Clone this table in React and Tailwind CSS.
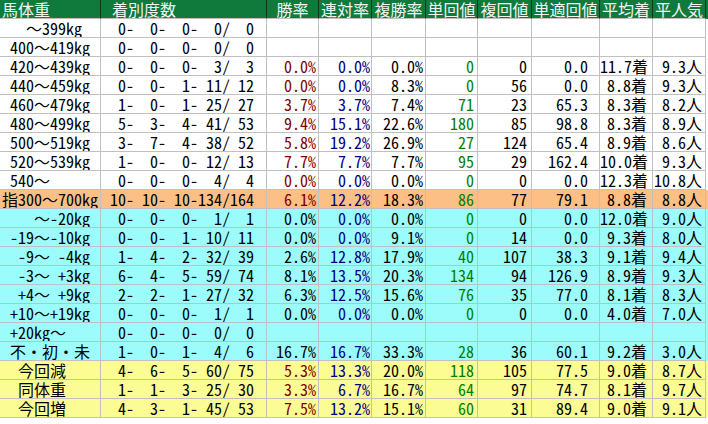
const cols = "grid grid-cols-[101px_166px_52px_53px_54px_52px_54px_68px_53px_53px]";

const headers = ["馬体重", "着別度数", "勝率", "連対率", "複勝率", "単回値", "複回値", "単適回値", "平均着", "平人気"];

// label, counts, win, rentai, fukusho, tan, fuku, tanteki, chaku, ninki
const rows = [
  ["w", "   ～399kg", "  0-  0-  0-  0/  0"],
  ["w", " 400～419kg", "  0-  0-  0-  0/  0"],
  ["w", " 420～439kg", "  0-  0-  0-  3/  3", "0.0%", "0.0%", "0.0%", "0", "0", "0.0", "11.7着", "9.3人"],
  ["w", " 440～459kg", "  0-  0-  1- 11/ 12", "0.0%", "0.0%", "8.3%", "0", "56", "0.0", "8.8着", "9.3人"],
  ["w", " 460～479kg", "  1-  0-  1- 25/ 27", "3.7%", "3.7%", "7.4%", "71", "23", "65.3", "8.3着", "8.2人"],
  ["w", " 480～499kg", "  5-  3-  4- 41/ 53", "9.4%", "15.1%", "22.6%", "180", "85", "98.8", "8.3着", "8.9人"],
  ["w", " 500～519kg", "  3-  7-  4- 38/ 52", "5.8%", "19.2%", "26.9%", "27", "124", "65.4", "8.9着", "8.6人"],
  ["w", " 520～539kg", "  1-  0-  0- 12/ 13", "7.7%", "7.7%", "7.7%", "95", "29", "162.4", "10.0着", "9.3人"],
  ["w", " 540～", "  0-  0-  0-  4/  4", "0.0%", "0.0%", "0.0%", "0", "0", "0.0", "12.3着", "10.8人"],
  ["o", "指300～700kg", " 10- 10- 10-134/164", "6.1%", "12.2%", "18.3%", "86", "77", "79.1", "8.8着", "8.8人"],
  ["c", "    ～-20kg", "  0-  0-  0-  1/  1", "0.0%", "0.0%", "0.0%", "0", "0", "0.0", "12.0着", "9.0人"],
  ["c", " -19～-10kg", "  0-  0-  1- 10/ 11", "0.0%", "0.0%", "9.1%", "0", "14", "0.0", "9.3着", "8.0人"],
  ["c", "  -9～ -4kg", "  1-  4-  2- 32/ 39", "2.6%", "12.8%", "17.9%", "40", "107", "38.3", "9.1着", "9.4人"],
  ["c", "  -3～ +3kg", "  6-  4-  5- 59/ 74", "8.1%", "13.5%", "20.3%", "134", "94", "126.9", "8.9着", "9.3人"],
  ["c", "  +4～ +9kg", "  2-  2-  1- 27/ 32", "6.3%", "12.5%", "15.6%", "76", "35", "77.0", "8.1着", "8.3人"],
  ["c", " +10～+19kg", "  0-  0-  0-  1/  1", "0.0%", "0.0%", "0.0%", "0", "0", "0.0", "4.0着", "7.0人"],
  ["c", " +20kg～", "  0-  0-  0-  0/  0"],
  ["c", " 不・初・未", "  1-  0-  1-  4/  6", "16.7%", "16.7%", "33.3%", "28", "36", "60.1", "9.2着", "3.0人"],
  ["y", "  今回減", "  4-  6-  5- 60/ 75", "5.3%", "13.3%", "20.0%", "118", "105", "77.5", "9.0着", "8.7人"],
  ["y", "  同体重", "  1-  1-  3- 25/ 30", "3.3%", "6.7%", "16.7%", "64", "97", "74.7", "8.1着", "9.7人"],
  ["y", "  今回増", "  4-  3-  1- 45/ 53", "7.5%", "13.2%", "15.1%", "60", "31", "89.4", "9.0着", "9.1人"],
];

const bgs = { w: "bg-white", o: "bg-[#fcbf86]", c: "bg-[#9cfcfc]", y: "bg-[#fcfc94]" };

const numPad = ["pr-[2px]", "pr-[1px]", "pr-[2px]", "pr-[3px]", "pr-[4px]", "pr-[11px]", "pr-[5px]", "pr-[3px]"];

function numColor(i, kind) {
  if (i === 0) return kind === "c" ? "text-black" : "text-[#800000]";
  if (i === 1) return "text-[#000080]";
  if (i === 3) return "text-[#008000]";
  return "text-black";
}

const cell = "h-[19px] border-r border-b border-[#c0c0c0] whitespace-pre overflow-hidden leading-[18px]";

function Row({ r }) {
  const [kind, label, counts, ...nums] = r;
  const vals = nums.length ? nums : ["", "", "", "", "", "", "", ""];
  return (
    <div className={`${cols} ${bgs[kind]}`}>
      <div className={`${cell} pl-[2px]`}>{label}</div>
      <div className={`${cell} pl-[1px]`}>{counts}</div>
      {vals.map((v, i) => (
        <div key={i} className={`${cell} text-right ${numPad[i]} ${numColor(i, kind)}`}>{v}</div>
      ))}
    </div>
  );
}

export default function App() {
  return (
    <div className="w-[708px] h-[424px] bg-white text-black text-[16px] font-['Noto_Sans_Mono_CJK_JP','Noto_Sans_CJK_JP',monospace]">
      <div className={`${cols} bg-[#0f7a3b] text-[#f4f4f4]`}>
        {headers.map((h, i) => (
          <div
            key={h}
            className={`h-[19px] border-r border-b border-r-[#0a3a1c] border-b-[#c0c0c0] leading-[18px] whitespace-pre overflow-hidden ${
              i === 0 ? "pl-[2px]" : i === 1 ? "pl-[11px]" : "text-center"
            }`}
          >
            {h}
          </div>
        ))}
      </div>
      {rows.map((r, i) => (
        <Row key={i} r={r} />
      ))}
    </div>
  );
}
